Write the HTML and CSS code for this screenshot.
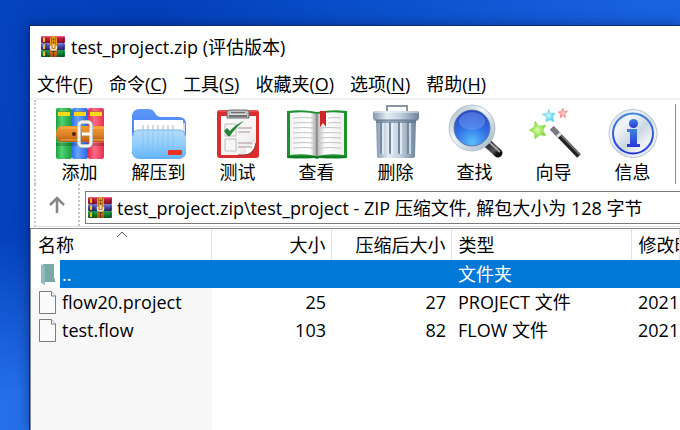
FILE: index.html
```html
<!DOCTYPE html>
<html lang="zh-CN">
<head>
<meta charset="utf-8">
<title>test_project.zip</title>
<link rel="stylesheet" href="styles.css">
</head>
<body>
<svg class="defs" aria-hidden="true">
  <defs>
    <linearGradient id="red" x2="0" y2="1"><stop stop-color="#f5669a"/><stop offset=".3" stop-color="#c51f3c"/><stop offset="1" stop-color="#7e1030"/></linearGradient>
    <linearGradient id="blue" x2="0" y2="1"><stop stop-color="#7d86dc"/><stop offset=".5" stop-color="#4646a4"/><stop offset="1" stop-color="#28245e"/></linearGradient>
    <linearGradient id="green" x2="0" y2="1"><stop stop-color="#26a04a"/><stop offset=".5" stop-color="#118338"/><stop offset="1" stop-color="#074a20"/></linearGradient>
    <linearGradient id="gold" x2="0" y2="1"><stop stop-color="#e5a31c"/><stop offset=".4" stop-color="#f2a01b"/><stop offset="1" stop-color="#a44f12"/></linearGradient>
    <linearGradient id="bookG"><stop stop-color="#1f9f46"/><stop offset=".35" stop-color="#4fd36e"/><stop offset="1" stop-color="#1c9a40"/></linearGradient>
    <linearGradient id="bookB"><stop stop-color="#2f6ff0"/><stop offset=".35" stop-color="#67a4ff"/><stop offset="1" stop-color="#2b64e6"/></linearGradient>
    <linearGradient id="bookR"><stop stop-color="#e22c4c"/><stop offset=".4" stop-color="#ff6a85"/><stop offset="1" stop-color="#e4304c"/></linearGradient>
    <linearGradient id="belt" x2="0" y2="1"><stop stop-color="#f09a2c"/><stop offset=".5" stop-color="#e0862a"/><stop offset="1" stop-color="#b45a0c"/></linearGradient>
    <linearGradient id="folderFront" x2="0" y2="1"><stop stop-color="#b5dcf8"/><stop offset=".5" stop-color="#8fcdfc"/><stop offset="1" stop-color="#62b2fa"/></linearGradient>
    <linearGradient id="folderBack" x2="0" y2="1"><stop stop-color="#5c98fa"/><stop offset="1" stop-color="#3a6ee6"/></linearGradient>
    <linearGradient id="paper" x2="1" y2="1"><stop stop-color="#fff"/><stop offset=".7" stop-color="#f1f1f1"/><stop offset="1" stop-color="#d4d4d4"/></linearGradient>
    <linearGradient id="pageL"><stop stop-color="#f4f4f4"/><stop offset=".75" stop-color="#fff"/><stop offset="1" stop-color="#9c9c9c"/></linearGradient>
    <linearGradient id="pageR"><stop stop-color="#b4b4b4"/><stop offset=".3" stop-color="#fff"/><stop offset="1" stop-color="#eee"/></linearGradient>
    <linearGradient id="steel"><stop stop-color="#8497ab"/><stop offset=".3" stop-color="#e2ebf3"/><stop offset=".6" stop-color="#c2d1df"/><stop offset="1" stop-color="#6f849b"/></linearGradient>
    <linearGradient id="ring" x2="1" y2="1"><stop stop-color="#a9bac8"/><stop offset=".4" stop-color="#f1f7fb"/><stop offset="1" stop-color="#a3b7c6"/></linearGradient>
    <radialGradient id="lens" cy=".85" r=".75"><stop stop-color="#58bffa"/><stop offset=".5" stop-color="#3477ea"/><stop offset="1" stop-color="#2447c2"/></radialGradient>
    <linearGradient id="handle" x2="1" y2="1"><stop stop-color="#202020"/><stop offset=".7" stop-color="#55555a"/><stop offset="1" stop-color="#111"/></linearGradient>
    <linearGradient id="disc" x2="1" y2="1"><stop stop-color="#c9d5df"/><stop offset=".3" stop-color="#f2f5f8"/><stop offset=".55" stop-color="#ccd7e0"/><stop offset=".75" stop-color="#f3f6f8"/><stop offset="1" stop-color="#b8c5d0"/></linearGradient>
    <linearGradient id="info" x2="0" y2="1"><stop stop-color="#4084dc"/><stop offset="1" stop-color="#2435dc"/></linearGradient>
    <radialGradient id="starG"><stop stop-color="#dcfca4"/><stop offset="1" stop-color="#73d62e"/></radialGradient>
    <radialGradient id="starC"><stop stop-color="#cff8ff"/><stop offset="1" stop-color="#3ec8ea"/></radialGradient>
    <radialGradient id="starR"><stop stop-color="#ffd2d2"/><stop offset="1" stop-color="#f07884"/></radialGradient>
  </defs>
  <symbol id="archive" viewBox="0 0 24 21">
    <rect width="24" height="7" rx="1" fill="url(#red)"/>
    <rect y="7" width="24" height="7" rx="1" fill="url(#blue)"/>
    <rect y="14" width="24" height="7" rx="1" fill="url(#green)"/>
    <path d="M3 1.500v4.500M3 8.500v4.500M3 15.500v4.500" stroke="#f2c21c" stroke-width="2"/>
    <path d="M5.500 1v19M22.500 1v19" stroke="#000" stroke-opacity=".2"/>
    <path d="M9 21V3q0-3 3.500-3T16 3v18z" fill="url(#gold)"/>
    <path d="M10.500 1v8M14.500 1v8" stroke="#8f5310" stroke-opacity=".6"/>
    <circle cx="12.500" cy="3.500" r="1" fill="#623508"/>
    <circle cx="12.500" cy="6.500" r="1" fill="#623508"/>
    <path d="M9.500 10v2q0 2 3 2t3-2v-2M12.500 8.500v3.500" fill="none" stroke="#e4e4e4" stroke-width="1.500"/>
    <path d="M10.500 15.500h4M12.500 16v5" stroke="#6f310d" stroke-width="1"/>
  </symbol>
  <symbol id="file" viewBox="0 0 18 23">
    <path d="M.5.5H12.500L16.500 5v17.500H.5z" fill="#fafafa" stroke="#7c7c7c"/>
    <path d="M12.500 .5V5h4" fill="#fff" stroke="#7c7c7c"/>
  </symbol>
</svg>

<main class="window">
  <header class="titlebar">
    <svg class="archive-icon" aria-hidden="true"><use href="#archive"/></svg>
    <h1 class="title">test_project.zip (评估版本)</h1>
  </header>

  <nav class="menubar">
    <button class="menu">文件(<u>F</u>)</button>
    <button class="menu">命令(<u>C</u>)</button>
    <button class="menu">工具(<u>S</u>)</button>
    <button class="menu">收藏夹(<u>O</u>)</button>
    <button class="menu">选项(<u>N</u>)</button>
    <button class="menu">帮助(<u>H</u>)</button>
  </nav>

  <div class="toolbar">
    <button class="tool">
      <svg viewBox="0 0 60 56" aria-hidden="true">
        <rect x="6" y="4" width="16" height="51" rx="2" fill="url(#bookG)"/>
        <rect x="22" y="4" width="16" height="51" rx="2" fill="url(#bookB)"/>
        <rect x="38" y="4" width="16" height="51" rx="2" fill="url(#bookR)"/>
        <path d="M6 39h48v3H6z" fill="#000" opacity=".2"/>
        <path d="M8 8h12v4H8zM24 8h12v4H24zM40 8h12v4H40z" fill="#fbd81e"/>
        <path d="M8 7.500h12M24 7.500h12M40 7.500h12" stroke="#8a7a18" stroke-opacity=".5"/>
        <path d="M10 22h44v16H10q-4-2-4-8t4-8z" fill="url(#belt)"/>
        <path d="M10 24h17M10 36h17M43 24h11M43 36h11" stroke="#ffc667" stroke-opacity=".8"/>
        <circle cx="24" cy="30" r="2" fill="#4d240a"/>
        <rect x="29" y="18" width="12" height="24" rx="3" fill="none" stroke="#8d8f92" stroke-width="4"/>
        <rect x="29" y="18" width="12" height="24" rx="3" fill="none" stroke="#f0f1f2" stroke-width="3"/>
        <path d="M32 30h9" stroke="#fff" stroke-width="3"/>
      </svg>
      <span>添加</span>
    </button>
    <button class="tool">
      <svg viewBox="0 0 60 56" aria-hidden="true">
        <path d="M3 50V13q0-8 8-8h8q5 0 7 4 2 4 6 4h18q7 0 7 7v30z" fill="url(#folderBack)"/>
        <path d="M8 19h48v14H8z" fill="#d4def0"/>
        <path d="M5 16h49v20H5z" fill="#fff"/>
        <path d="M14 21v7M19 21v7M24 21v7M29 21v7M34 21v7M39 21v7M44 21v7" stroke="#aab4c2" stroke-width="1"/>
        <rect x="3" y="26" width="54" height="29" rx="7" fill="url(#folderFront)"/>
        <path d="M14 27v19M19 27v19M24 27v19M29 27v19M34 27v19M39 27v17M44 27v17" stroke="#75afe0" stroke-opacity=".4"/>
        <path d="M4 32q0-6 6-6h40q6 0 6 6" fill="none" stroke="#72b3ec"/>
        <rect x="39" y="46" width="14" height="5" rx="1" fill="#ee3020"/>
      </svg>
      <span>解压到</span>
    </button>
    <button class="tool">
      <svg viewBox="0 0 60 56" aria-hidden="true">
        <rect x="9" y="6" width="42" height="48" rx="3" fill="#d92d30"/>
        <path d="M11 7h38" fill="none" stroke="#f27472"/>
        <path d="M13 12h35v26q-1 10-10 13H13z" fill="url(#paper)"/>
        <path d="M48 38q-3 5-12 5 4 4 2 8 9-3 10-13z" fill="#fff"/>
        <path d="M48 39q-2 12-12 12h-6" fill="none" stroke="#8a3333"/>
        <path d="M19 14V8q0-2 3-2h16q3 0 3 2v6z" fill="#bfc0c2" stroke="#66686c"/>
        <path d="M23 9h14M21 12h18" stroke="#555" stroke-width="1.500"/>
        <path d="M22 10h16" stroke="#fff"/>
        <path d="M17 20h11v12H17zM17 35h11v12H17z" fill="#f5f5f5" stroke="#c2bcbc"/>
        <path d="M30 24h14M30 28h12M30 39h14M30 43h14" stroke="#a89494" stroke-width="1"/>
        <path d="M16 27l3-3 3 3Q28 20 36 17 27 24 22 32q-2 1-3-1z" fill="#24853a"/>
      </svg>
      <span>测试</span>
    </button>
    <button class="tool">
      <svg viewBox="0 0 60 56" aria-hidden="true">
        <path d="M0 7q15-2 30 1 15-3 30-1v47q-15 1-27 0l-3 1-3-1q-12 1-27 0z" fill="#1d922e"/>
        <path d="M1 53h58" stroke="#0b6019"/>
        <path d="M3 9q15-2 27 1v42q-13-3-27-1z" fill="url(#pageL)"/>
        <path d="M57 9q-15-2-27 1v42q13-3 27-1z" fill="url(#pageR)"/>
        <path d="M30 9v44" stroke="#777"/>
        <path d="M6 14q11-1 21 0M6 19q11-1 21 0M6 24q11-1 21 0M6 29q11-1 21 0M6 34q11-1 21 0M6 39q11-1 21 0M6 44q11-1 21 0M54 14q-7-1-13 0M54 19q-7-1-13 0M54 24q-11-1-21 0M54 29q-11-1-21 0M54 34q-11-1-21 0M54 39q-11-1-21 0M54 44q-11-1-21 0" fill="none" stroke="#c4c4c4"/>
        <path d="M33 7h6v16l-3-4-3 4z" fill="#ce2528"/>
      </svg>
      <span>查看</span>
    </button>
    <button class="tool">
      <svg viewBox="0 0 60 56" aria-hidden="true">
        <path d="M21 8V2h20v6" fill="none" stroke="#8796a5" stroke-width="2"/>
        <path d="M10 15h40l-1 37q0 2-3 2H14q-3 0-3-2z" fill="url(#steel)"/>
        <path d="M15 19v30M24 19v30M33 19v30M42 19v30" stroke="#73899f" stroke-width="2" stroke-linecap="round"/>
        <path d="M17 19v31M26 19v31M35 19v31M44 19v31" stroke="#f5faff" stroke-opacity=".8" stroke-width="1.500"/>
        <path d="M10 16h40v3H10z" fill="#51677f" opacity=".5"/>
        <rect x="7" y="7" width="46" height="9" rx="2" fill="url(#steel)"/>
        <path d="M8 8h44" stroke="#eef5fa"/>
        <path d="M8 16h44" stroke="#667c93"/>
      </svg>
      <span>删除</span>
    </button>
    <button class="tool">
      <svg viewBox="0 0 60 56" aria-hidden="true">
        <path d="M42 39l11 10" stroke="url(#handle)" stroke-width="9" stroke-linecap="round"/>
        <path d="M44 38l11 10" stroke="#a3a3aa" stroke-width="2"/>
        <path d="M38 40l6-6" stroke="#d7dee3" stroke-width="3"/>
        <circle cx="27" cy="24" r="20.500" fill="url(#lens)" stroke="url(#ring)" stroke-width="5"/>
        <circle cx="27" cy="24" r="18" fill="none" stroke="#5f7ca7"/>
        <circle cx="27" cy="24" r="23" fill="none" stroke="#9aabb8" stroke-opacity=".6"/>
        <ellipse cx="27" cy="17" rx="13" ry="9" fill="#7b9df3" opacity=".45"/>
      </svg>
      <span>查找</span>
    </button>
    <button class="tool">
      <svg viewBox="0 0 60 56" aria-hidden="true">
        <path d="M28 24l27 28" stroke="#222" stroke-width="5"/>
        <path d="M29 23l27 28" stroke="#777" stroke-width="1.500"/>
        <path d="M28 24l7 7" stroke="#777b80" stroke-width="5"/>
        <path d="M34 30l2 2" stroke="#e6e6e6" stroke-width="5"/>
        <path d="M11 17l4 5 7-1-3 5 3 6-6-1-5 4-1-6-5-3 5-3z" fill="url(#starG)" stroke="#a3dd80" stroke-width=".5"/>
        <path d="M25 5l1 4 5 0-2 4 1 5-4-2-4 2 0-5-4-3 5-1z" fill="url(#starC)" stroke="#9fe0f0" stroke-width=".5"/>
        <path d="M39 4l1 3h4l-3 3 1 4-3-2-3 2 0-4-2-2 3-1z" fill="url(#starR)" stroke="#f2a4a8" stroke-width=".5"/>
      </svg>
      <span>向导</span>
    </button>
    <button class="tool">
      <svg viewBox="0 0 60 56" aria-hidden="true">
        <circle cx="30" cy="29.500" r="24" fill="url(#disc)" stroke="#bcc7d0"/>
        <circle cx="30" cy="29.500" r="20" fill="none" stroke="url(#info)" stroke-width="2"/>
        <circle cx="30.500" cy="19.500" r="4.500" fill="url(#info)"/>
        <path d="M24 25h10v15h3v3H24v-3h3V28h-3z" fill="url(#info)"/>
      </svg>
      <span>信息</span>
    </button>
    <div class="separator"></div>
  </div>

  <div class="addressbar">
    <button class="up" aria-label="向上">
      <svg viewBox="0 0 18 18" aria-hidden="true"><path d="M9 17V3M2 9l7-7 7 7" fill="none" stroke="#858585" stroke-width="2.500"/></svg>
    </button>
    <div class="address">
      <svg class="archive-icon" aria-hidden="true"><use href="#archive"/></svg>
      <input class="path" aria-label="路径" value="test_project.zip\test_project - ZIP 压缩文件, 解包大小为 128 字节">
    </div>
  </div>

  <section class="list">
    <table class="files">
      <colgroup><col class="col-name"><col class="col-size"><col class="col-size"><col class="col-type"><col></colgroup>
      <thead>
        <tr>
          <th class="sorted">名称<svg class="sort" viewBox="0 0 12 7" aria-hidden="true"><path d="M1 6l5-5 5 5" fill="none" stroke="#555"/></svg></th>
          <th class="num">大小</th>
          <th class="num">压缩后大小</th>
          <th>类型</th>
          <th>修改时间</th>
        </tr>
      </thead>
      <tbody>
        <tr class="selected">
          <td><div class="name"><span class="cell-icon"><svg viewBox="0 0 18 23" aria-hidden="true"><path d="M4 1h11v14l1 1v3H5z" fill="#7aa9a5"/><path d="M2 1l4 2v19l-4-2z" fill="#8abcc4"/></svg></span>..</div></td>
          <td></td><td></td>
          <td>文件夹</td>
          <td></td>
        </tr>
        <tr>
          <td><div class="name"><span class="cell-icon"><svg aria-hidden="true"><use href="#file"/></svg></span>flow20.project</div></td>
          <td class="num">25</td>
          <td class="num">27</td>
          <td>PROJECT 文件</td>
          <td>2021</td>
        </tr>
        <tr>
          <td><div class="name"><span class="cell-icon"><svg aria-hidden="true"><use href="#file"/></svg></span>test.flow</div></td>
          <td class="num">103</td>
          <td class="num">82</td>
          <td>FLOW 文件</td>
          <td>2021</td>
        </tr>
      </tbody>
    </table>
  </section>
</main>
</body>
</html>
```
FILE: styles.css
```css
* {
  box-sizing: border-box;
}

body {
  display: flex;
  min-height: 100vh;
  margin: 0;
  padding: 25px 0 0 29px;
  overflow: hidden;
  color: #000;
  font: 18px/24px "Open Sans", "Noto Sans CJK SC", sans-serif;
  background:
    linear-gradient(to bottom, transparent 55%, #2470ea 92%) left / 30px 100% no-repeat,
    linear-gradient(100deg, #0444bd, #033fb9 20%, #0a50cb 50%, #1861e0 85%, #1a63e2);
}

button,
input {
  padding: 0;
  border: 0;
  background: none;
  color: inherit;
  font: inherit;
}

.defs {
  position: absolute;
  width: 0;
  height: 0;
}

.window {
  display: flex;
  flex: 1;
  flex-direction: column;
  min-width: 0;
  border: solid #0b2c6d;
  border-width: 1px 0 0 1px;
  background: #fff;
  box-shadow: 0 0 12px rgba(0, 20, 70, 0.5);
}

.titlebar {
  display: flex;
  align-items: center;
  gap: 6px;
  height: 43px;
  padding: 0 0 2px 11px;
}

.archive-icon {
  flex: none;
  width: 24px;
  height: 21px;
}

.title {
  margin: 0;
  font-size: 18px;
  font-weight: 400;
  white-space: nowrap;
}

.menubar {
  display: flex;
  gap: 16px;
  height: 31px;
  padding-left: 7px;
  border-bottom: 2px solid #f0f0f0;
}

.menu {
  white-space: nowrap;
}

.menu u {
  text-underline-offset: 2px;
}

.toolbar {
  display: flex;
  margin-left: 4px;
  padding: 4px 4px 0;
  border-left: 2px dotted #c8c8c8;
  overflow: hidden;
}

.tool {
  display: flex;
  flex: none;
  flex-direction: column;
  align-items: center;
  width: 79px;
}

.tool svg {
  width: 60px;
  height: 56px;
}

.separator {
  margin-left: 3px;
  border-left: 1px solid #8c8c8c;
}

.addressbar {
  display: flex;
  margin-left: 4px;
  border-left: 2px dotted #c8c8c8;
  border-bottom: 1px solid #e0e0e0;
}

.up {
  display: flex;
  align-items: center;
  justify-content: center;
  width: 44px;
  border-right: 2px dotted #c8c8c8;
}

.up svg {
  width: 18px;
  height: 18px;
}

.address {
  display: flex;
  flex: 1;
  align-items: center;
  gap: 5px;
  height: 33px;
  margin: 7px 0 2px 5px;
  padding-left: 2px;
  border: 1px solid #7a7a7a;
  border-right: 0;
}

.path {
  flex: 1;
  min-width: 0;
}

.list {
  flex: 1;
  margin-top: 1px;
  border: solid #828790;
  border-width: 1px 0 0 1px;
  overflow: hidden;
  background: linear-gradient(#f7f7f7, #f7f7f7) left / 181px 100% no-repeat #fff;
}

.files {
  width: 100%;
  table-layout: fixed;
  border-collapse: collapse;
}

.col-name {
  width: 180px;
}

.col-size {
  width: 120px;
}

.col-type {
  width: 180px;
}

.files th,
.files td {
  height: 28px;
  padding: 0 5px 0 7px;
  font-weight: 400;
  text-align: left;
  white-space: nowrap;
  overflow: hidden;
}

.files th {
  height: 31px;
  border-right: 1px solid #e2e2e2;
  background: #fff;
}

.files .num {
  text-align: right;
}

.files .sorted {
  position: relative;
}

.sort {
  position: absolute;
  top: 2px;
  left: 50%;
  width: 12px;
  height: 7px;
  margin-left: -5px;
}

.selected {
  background: #0078d7;
  color: #fff;
}

.name {
  display: flex;
  align-items: center;
  gap: 2px;
}

.files td:first-child {
  padding-left: 0;
}

.cell-icon {
  display: flex;
  flex: none;
  align-items: center;
  width: 29px;
  height: 28px;
  padding-left: 8px;
}

.selected .cell-icon {
  background: #fff;
}

.cell-icon svg {
  width: 18px;
  height: 23px;
}
```
